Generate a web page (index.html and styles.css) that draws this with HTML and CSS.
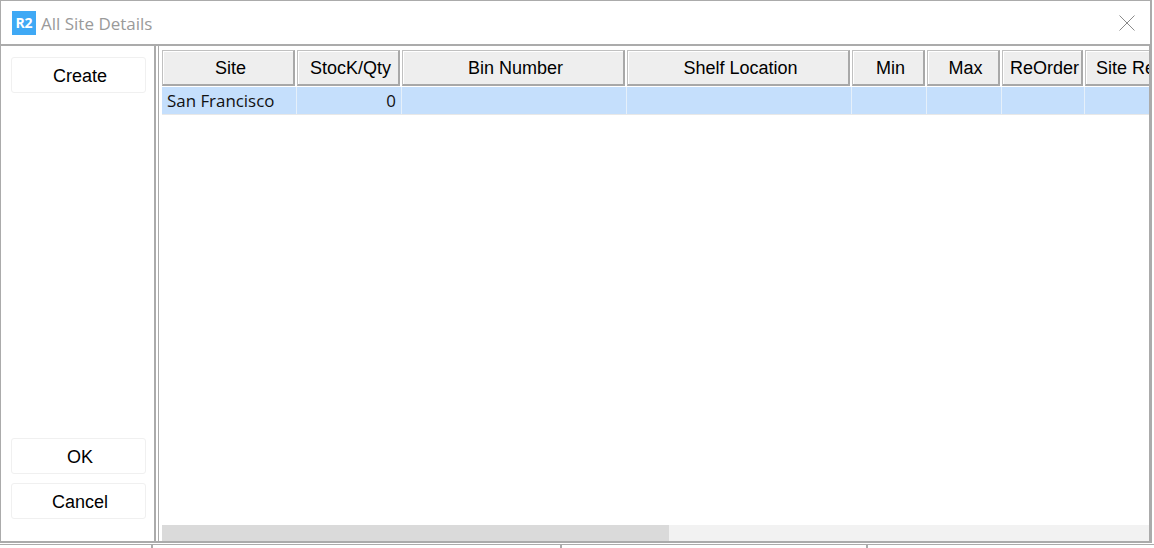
FILE: index.html
```html
<!DOCTYPE html>
<html lang="en">
<head>
<meta charset="utf-8">
<title>All Site Details</title>
<link rel="stylesheet" href="styles.css">
</head>
<body>
<div class="window">
  <header class="titlebar">
    <div class="logo">R2</div>
    <div class="title">All Site Details</div>
    <svg class="close" width="16" height="16" viewBox="0 0 16 16"><path d="M0.5 0.5L15.5 15.5M15.5 0.5L0.5 15.5" stroke="#8a8a8a" stroke-width="1" fill="none"/></svg>
  </header>
  <div class="content">
    <aside class="side">
      <button class="btn">Create</button>
      <div class="spacer"></div>
      <button class="btn">OK</button>
      <button class="btn">Cancel</button>
    </aside>
    <main class="gridbox">
      <div class="grid">
        <div class="heads">
          <div class="head">Site</div>
          <div class="head">StocK/Qty</div>
          <div class="head">Bin Number</div>
          <div class="head">Shelf Location</div>
          <div class="head">Min</div>
          <div class="head">Max</div>
          <div class="head">ReOrder</div>
          <div class="head head-clip">Site Re</div>
        </div>
        <div class="row">
          <div class="cell">San Francisco</div>
          <div class="cell num">0</div>
          <div class="cell"></div>
          <div class="cell"></div>
          <div class="cell"></div>
          <div class="cell"></div>
          <div class="cell"></div>
          <div class="cell"></div>
        </div>
      </div>
      <div class="scroll"><div class="thumb"></div></div>
    </main>
  </div>
</div>
<div class="backdrop">
  <div class="back-col back-a"></div>
  <div class="back-col back-b"></div>
  <div class="back-col back-c"></div>
  <div class="back-col back-d"></div>
</div>
</body>
</html>
```

FILE: styles.css
```css
html, body { margin: 0; padding: 0; background: #fff; overflow: hidden; }
body { width: 1154px; height: 548px; }
.window {
  width: 1152px; height: 543px; box-sizing: border-box;
  border: 1px solid #ababab; border-width: 1px 2px 2px 1px;
  background: #fff; display: flex; flex-direction: column;
}
.titlebar { height: 43px; display: flex; align-items: center; padding-left: 11px; flex: none; padding-top: 1px; box-sizing: border-box; }
.logo {
  width: 24px; height: 24px; background: #3fa9f5; color: #fff;
  font: bold 14px/24px "Open Sans", sans-serif; text-align: center;
}
.title { margin-left: 5px; font: 17px "Open Sans", sans-serif; color: #9a9a9a; flex: 1; }
.close { margin-right: 15px; }
.content { flex: 1; display: flex; border-top: 2px solid #ababab; min-height: 0; }
.side {
  width: 155px; flex: none; display: flex; flex-direction: column; gap: 9px;
  padding: 11px 8px 22px 10px; box-sizing: border-box; border-right: 2px solid #ababab;
}
.spacer { flex: 1; }
.btn {
  height: 36px; width: 135px; flex: none; background: #fff; border: 1px solid #f0f0f0; border-radius: 3px;
  font: 18px "Liberation Sans", Arial, sans-serif; color: #000; padding: 2px 0 0 3px;
}
.gridbox {
  flex: 1; margin-left: 2px; border-left: 1px solid #ababab; border-right: 1px solid #ababab;
  display: flex; flex-direction: column; padding: 3px 0 0 3px; min-width: 0;
}
.grid { flex: 1; overflow: hidden; min-height: 0; }
.heads { display: grid; grid-template-columns: 135px 105px 225px 225px 75px 75px 83px 100px; padding-top: 1px; height: 37px; }
.head {
  height: 36px; box-sizing: border-box; margin-right: 2px; padding-left: 5px;
  background: #eee; border: 1px solid #b5b5b5; border-width: 1px 2px 2px 1px; border-color: #c0c0c0 #a8a8a8 #a8a8a8 #c0c0c0;
  box-shadow: inset 1px 1px 0 #fff;
  font: 18px/35px "Liberation Sans", Arial, sans-serif; color: #000; text-align: center; white-space: nowrap;
}
.head-clip { margin-right: 0; text-align: left; padding-left: 10px; }
.row { display: grid; grid-template-columns: 135px 105px 225px 225px 75px 75px 83px 100px; height: 28px; border-bottom: 1px solid #e8e8e8; box-sizing: border-box; }
.cell {
  background: #c5dffc; border-right: 1px solid #e6f0fa; box-sizing: border-box;
  font: 16.9px/27px "Open Sans", sans-serif; color: #111; padding: 0 5px; white-space: nowrap;
}
.num { text-align: right; }
.scroll { height: 16px; background: #f2f2f2; flex: none; }
.thumb { width: 507px; height: 100%; background: #dadada; }
.backdrop { display: flex; height: 4px; margin-top: 1px; border-top: 1px solid #ababab; box-sizing: border-box; }
.back-col { border-left: 2px solid #ababab; box-sizing: border-box; }
.back-a { width: 151px; border-left: 0; }
.back-b { width: 409px; }
.back-c { width: 306px; }
.back-d { flex: 1; }
```
